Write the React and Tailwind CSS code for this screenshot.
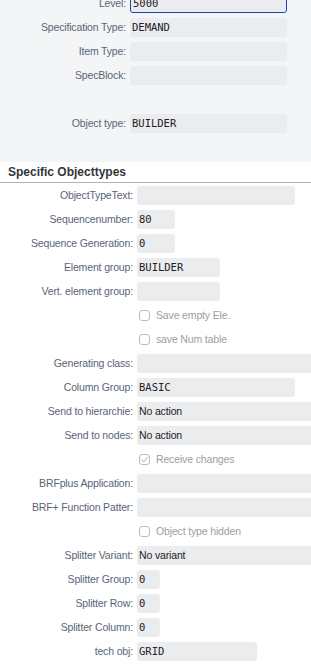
import React from 'react';

// top block: label column 126px, inputs 157px wide
const topFields = [
  { label: "Level:", value: "5000", focus: true },
  { label: "Specification Type:", value: "DEMAND" },
  { label: "Item Type:", value: "" },
  { label: "SpecBlock:", value: "" },
  { spacer: true },
  { label: "Object type:", value: "BUILDER" },
];

// specific objecttypes block: label column 133px
const specificFields = [
  { label: "ObjectTypeText:", value: "", w: "w-[158px]" },
  { label: "Sequencenumber:", value: "80", w: "w-[38px]" },
  { label: "Sequence Generation:", value: "0", w: "w-[38px]" },
  { label: "Element group:", value: "BUILDER", w: "w-[83px]" },
  { label: "Vert. element group:", value: "", w: "w-[83px]" },
  { check: "Save empty Ele." },
  { check: "save Num table" },
  { label: "Generating class:", value: "", w: "w-[190px]" },
  { label: "Column Group:", value: "BASIC", w: "w-[158px]" },
  { label: "Send to hierarchie:", value: "No action", w: "w-[190px]", sans: true },
  { label: "Send to nodes:", value: "No action", w: "w-[190px]", sans: true },
  { check: "Receive changes", checked: true },
  { label: "BRFplus Application:", value: "", w: "w-[190px]" },
  { label: "BRF+ Function Patter:", value: "", w: "w-[190px]" },
  { check: "Object type hidden" },
  { label: "Splitter Variant:", value: "No variant", w: "w-[190px]", sans: true },
  { label: "Splitter Group:", value: "0", w: "w-[23px]" },
  { label: "Splitter Row:", value: "0", w: "w-[23px]" },
  { label: "Splitter Column:", value: "0", w: "w-[23px]" },
  { label: "tech obj:", value: "GRID", w: "w-[120px]" },
];

function Input({ value, w, focus, sans }) {
  const font = sans
    ? "font-['Liberation_Sans',Arial,sans-serif] text-[10.5px] tracking-[-0.15px] text-[#1d2126]"
    : "font-['DejaVu_Sans_Mono',monospace] text-[10.5px] text-[#1d2126]";
  return (
    <div
      className={
        "h-[19px] shrink-0 rounded-[3px] bg-[#ebeced] flex items-center px-[2px] whitespace-nowrap overflow-hidden " +
        w + " " + font + " " +
        (focus ? "border border-[#1c44b8] px-[1px]" : "")
      }
    >
      {value}
    </div>
  );
}

function Check({ text, checked }) {
  return (
    <div className="flex items-center gap-[6px] h-[19px] pl-[2px]">
      <div className="w-[11px] h-[11px] rounded-[3px] border border-[#b9bec3] bg-white flex items-center justify-center">
        {checked && (
          <svg width="9" height="9" viewBox="0 0 10 10">
            <path d="M1.5 5.2 L4 7.7 L8.7 2" fill="none" stroke="#8fb1d6" strokeWidth="1.1" />
          </svg>
        )}
      </div>
      <span className="text-[10.5px] tracking-[-0.15px] text-[#9a9ea3]">{text}</span>
    </div>
  );
}

function Row({ f, labelW }) {
  return (
    <div className="flex items-center h-[19px] mb-[5px]">
      <div className={labelW + " shrink-0 text-right pr-[4px] text-[10.5px] tracking-[-0.15px] text-[#586575] whitespace-nowrap"}>
        {f.label}
      </div>
      {f.check ? (
        <Check text={f.check} checked={f.checked} />
      ) : (
        <Input value={f.value} w={f.w} focus={f.focus} sans={f.sans} />
      )}
    </div>
  );
}

export default function App() {
  return (
    <div className="w-[311px] h-[668px] overflow-hidden bg-white font-['Liberation_Sans',Arial,sans-serif]">
      <div className="bg-[#f4f5f6] pb-[24px]">
        <div className="-mt-[6px]">
          {topFields.map((f, i) =>
            f.spacer ? (
              <div key={i} className="h-[19px] mb-[5px]" />
            ) : (
              <Row key={i} f={{ ...f, w: "w-[157px]" }} labelW="w-[130px]" />
            )
          )}
        </div>
      </div>
      <div className="h-[20px] flex items-center px-[8px] text-[12px] font-bold text-[#32363a] border-b border-[#a9b4be] box-content">
        Specific Objecttypes
      </div>
      <div className="pt-[3px]">
        {specificFields.map((f, i) => (
          <Row key={i} f={f} labelW="w-[137px]" />
        ))}
      </div>
    </div>
  );
}
